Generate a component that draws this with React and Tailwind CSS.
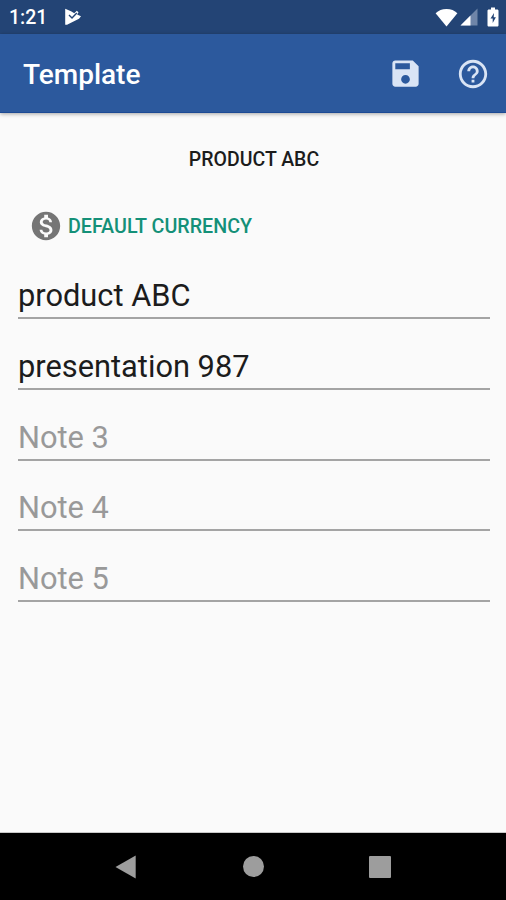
const fields = [
  { hint: 'Note 1', value: 'product ABC' },
  { hint: 'Note 2', value: 'presentation 987' },
  { hint: 'Note 3', value: '' },
  { hint: 'Note 4', value: '' },
  { hint: 'Note 5', value: '' },
];

function StatusBar() {
  return (
    <div className="flex h-[34px] items-center bg-[#234475] pr-[7px] pl-[9px] text-white">
      <span className="pt-px text-[19.5px] leading-none font-medium">1:21</span>
      <svg className="ml-[17px] h-[18px] w-[18px]" viewBox="0 0 18 18">
        <path fill="#fff" d="M1.2.8 7 3.3l3.3 1.9 2.5-2.4 1.7 1.5-1.4 2.3 3.9 1.6-2 2.6L3 16.8H1.2z" />
        <path fill="none" stroke="#234475" strokeWidth="1.4" d="m5 7 3 3 4.8-5" />
      </svg>

      <div className="ml-auto flex items-center">
        <svg className="h-[19px] w-[23px]" viewBox="0 0 23 19">
          <path fill="#fff" d="M.6 5.2C3.6 2.5 7 1 11.5 1s8 1.5 10.9 4.2L11.5 18.4z" />
        </svg>
        <svg className="ml-[2px] h-[18px] w-[18px]" viewBox="0 0 18 18">
          <path fill="#6f85a8" d="M17.5.5v17H.5z" />
          <path fill="#fff" d="M10.5 7.5v10H.5z" />
        </svg>
        <svg className="ml-[9px] h-[20px] w-[12px]" viewBox="0 0 12 20">
          <path fill="#fff" d="M4 .5h4v2h2.2c.7 0 1.3.6 1.3 1.3v14.4c0 .7-.6 1.3-1.3 1.3H1.8c-.7 0-1.3-.6-1.3-1.3V3.8c0-.7.6-1.3 1.3-1.3H4z" />
          <path fill="#234475" d="M7 6 3.5 11.5h2.2V16l3.2-5.8H6.7z" />
        </svg>
      </div>
    </div>
  );
}

function AppBar() {
  return (
    <header className="z-10 flex h-[79px] items-center border-b border-[#1c4a94] bg-[#2c599d] pl-[23px] pr-4 shadow-[0_1px_4px_rgba(0,0,0,0.35)]">
      <h1 className="pt-[4px] text-[28px] leading-none font-medium text-white">Template</h1>
      <button className="ml-auto" aria-label="Save">
        <svg className="h-[35px] w-[35px]" viewBox="0 0 24 24" fill="#d9e4f5">
          <path d="M17 3H5c-1.11 0-2 .9-2 2v14c0 1.1.89 2 2 2h14c1.1 0 2-.9 2-2V7l-4-4zm-5 16c-1.66 0-3-1.34-3-3s1.34-3 3-3 3 1.34 3 3-1.34 3-3 3zm3-10H5V5h10v4z" />
        </svg>
      </button>
      <button className="ml-[33px] pt-px" aria-label="Help">
        <svg className="h-[34px] w-[34px]" viewBox="0 0 24 24" fill="#d9e4f5">
          <path d="M11 18h2v-2h-2v2zm1-16C6.48 2 2 6.48 2 12s4.48 10 10 10 10-4.48 10-10S17.52 2 12 2zm0 18c-4.41 0-8-3.59-8-8s3.59-8 8-8 8 3.59 8 8-3.59 8-8 8zm0-14c-2.21 0-4 1.79-4 4h2c0-1.1.9-2 2-2s2 .9 2 2c0 2-3 1.75-3 5h2c0-2.25 3-2.5 3-5 0-2.21-1.79-4-4-4z" />
        </svg>
      </button>
    </header>
  );
}

function NavBar() {
  return (
    <nav className="flex h-[67px] items-center bg-black pl-[115px]">
      <svg className="h-[24px] w-[21px]" viewBox="0 0 21 24">
        <path fill="#9d9d9d" d="M20.7.5v23L.5 12z" />
      </svg>
      <div className="ml-[107px] h-[21px] w-[21px] rounded-full bg-[#9d9d9d]" />
      <div className="ml-[105px] h-[22px] w-[22px] rounded-[1px] bg-[#9d9d9d]" />
    </nav>
  );
}

export default function App() {
  return (
    <div className="flex h-[900px] w-[506px] flex-col overflow-hidden bg-[#fafafa] font-[Roboto,sans-serif]">
      <StatusBar />
      <AppBar />

      <main className="flex-1 border-b border-[#c8c8c8] pr-[16px] pl-[18px]">
        <div className="mt-[36px] text-center text-[19.5px] leading-[22px] font-medium text-[#1c1c1c]">
          PRODUCT ABC
        </div>

        <button className="mt-[37px] flex h-[36px] items-center pl-[10.5px]">
          <svg className="h-[34px] w-[34px]" viewBox="0 0 24 24" fill="#757575">
            <path d="M12 2C6.48 2 2 6.48 2 12s4.48 10 10 10 10-4.48 10-10S17.52 2 12 2zm1.41 16.09V20h-2.67v-1.93c-1.71-.36-3.16-1.46-3.27-3.4h1.96c.1 1.05.82 1.87 2.65 1.87 1.96 0 2.4-.98 2.4-1.59 0-.83-.44-1.61-2.67-2.14-2.48-.6-4.18-1.62-4.18-3.67 0-1.72 1.39-2.84 3.11-3.21V4h2.67v1.95c1.86.45 2.79 1.86 2.85 3.39H14.3c-.05-1.11-.64-1.87-2.22-1.87-1.5 0-2.4.68-2.4 1.64 0 .84.65 1.39 2.67 1.91s4.18 1.39 4.18 3.91c-.01 1.83-1.38 2.83-3.12 3.16z" />
          </svg>
          <span className="ml-[5.5px] pt-[2px] text-[19.7px] leading-[22px] font-medium text-[#149078]">DEFAULT CURRENCY</span>
        </button>

        <div className="mt-[31px] flex flex-col">
          {fields.map(({ hint, value }) => (
            <input
              key={hint}
              type="text"
              placeholder={hint}
              defaultValue={value}
              className="mb-[26.8px] h-[44px] w-full border-b-2 border-[#a4a4a4] pb-px text-[30.8px] leading-none text-[#1c1c1c] outline-none placeholder:text-[#999999]"
            />
          ))}
        </div>
      </main>

      <NavBar />
    </div>
  );
}
